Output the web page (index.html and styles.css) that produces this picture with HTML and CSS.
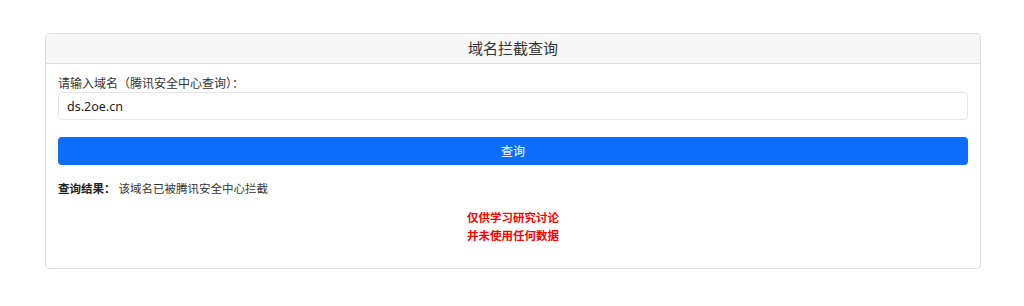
FILE: index.html
```html
<!DOCTYPE html>
<html lang="zh-CN">
<head>
<meta charset="utf-8">
<title>域名拦截查询</title>
<link rel="stylesheet" href="styles.css">
</head>
<body>
<div class="card">
  <div class="card-header">域名拦截查询</div>
  <div class="card-body">
    <label class="label" for="domain">请输入域名（腾讯安全中心查询）：</label>
    <input class="input" id="domain" type="text" value="ds.2oe.cn">
    <button class="btn" type="button">查询</button>
    <div class="result"><span class="result-key">查询结果：</span><span class="result-val">该域名已被腾讯安全中心拦截</span></div>
    <div class="notice">
      <div>仅供学习研究讨论</div>
      <div>并未使用任何数据</div>
    </div>
  </div>
</div>
</body>
</html>
```
FILE: styles.css
```css
html, body {
  margin: 0;
  padding: 0;
  background: #ffffff;
}
body {
  font-family: "Noto Sans", "Noto Sans CJK SC", sans-serif;
  color: #333333;
  padding-top: 33px;
}
.card {
  margin: 0 43px 0 45px;
  border: 1px solid #dedede;
  border-radius: 4px;
  overflow: hidden;
}
.card-header {
  height: 29px;
  line-height: 29px;
  background: #f7f7f7;
  border-bottom: 1px solid #dedede;
  text-align: center;
  font-size: 15px;
  color: #333333;
}
.card-body {
  padding: 12px 12px 23px;
  display: flex;
  flex-direction: column;
}
.label {
  font-size: 12px;
  line-height: 16px;
  color: #333333;
}
.input {
  box-sizing: border-box;
  height: 28px;
  border: 1px solid #e6e6e6;
  border-radius: 4px;
  padding: 0 8px;
  font-family: "Noto Sans", "Noto Sans CJK SC", sans-serif;
  font-size: 12.5px;
  color: #222222;
  outline: none;
  margin: 0;
}
.btn {
  box-sizing: border-box;
  margin-top: 17px;
  height: 28px;
  border: 0;
  border-radius: 4px;
  background: #0d6efd;
  color: #ffffff;
  font-family: "Noto Sans", "Noto Sans CJK SC", sans-serif;
  font-size: 12px;
  padding: 0;
}
.result {
  margin-top: 15px;
  font-size: 11.5px;
  line-height: 18px;
}
.result-key {
  font-weight: 700;
  color: #222222;
  margin-right: 3px;
}
.notice {
  margin-top: 11px;
  text-align: center;
  color: #ff0000;
  font-weight: 700;
  font-size: 11.5px;
  line-height: 18px;
}
```
